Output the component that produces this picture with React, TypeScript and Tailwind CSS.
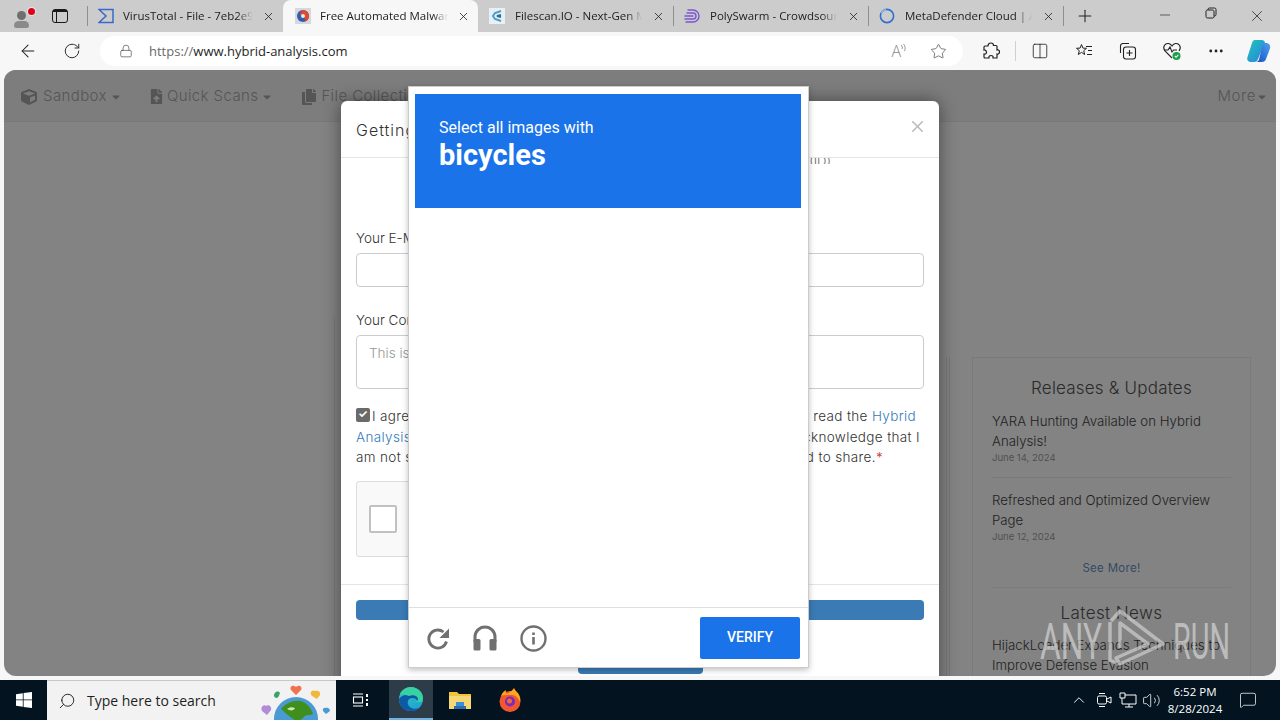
import { ArrowLeft, ChevronUp, Columns2, Lock, MessageSquare, Minus, MoreHorizontal, Plus, RotateCw, Search, Star, Volume2, X } from 'lucide-react'
import { FaCube, FaCopy, FaFileUpload, FaCaretDown } from 'react-icons/fa'
import type { ReactNode } from 'react'

const pageFont = { fontFamily: 'Inter, sans-serif' }

function VirusTotalIcon() {
  return (
    <svg width="16" height="16" viewBox="0 0 16 16" fill="none" stroke="#3b67c9" strokeWidth="1.5">
      <path d="M1 1.500h14v13H1L8 8z" />
    </svg>
  )
}

function HybridIcon() {
  return (
    <svg width="16" height="16" viewBox="0 0 16 16">
      <rect width="16" height="16" fill="#d8d8dc" />
      <circle cx="8" cy="8" r="6" fill="#2f5fb0" />
      <path d="M8 2a6 6 0 0 1 6 6 6 6 0 0 1-4 5.600C11 11 9 8 5 7c0-2 1-4 3-5z" fill="#e2492c" />
      <circle cx="8" cy="8" r="2" fill="#e8e8f0" />
    </svg>
  )
}

function FilescanIcon() {
  return (
    <svg width="16" height="16" viewBox="0 0 16 16" fill="none">
      <rect width="16" height="16" fill="#e8f0f5" />
      <path d="M12 3 6 5 4 8l2 3 6 2" stroke="#4b9fc9" strokeWidth="2" />
      <path d="M12 7 8 8l4 1" stroke="#2b6f9a" strokeWidth="2" />
    </svg>
  )
}

function PolySwarmIcon() {
  return (
    <svg width="16" height="16" viewBox="0 0 16 16" fill="none" stroke="#7a55d0" strokeWidth="1.400" strokeLinecap="round">
      <path d="M4 2h5a6 6 0 0 1 0 12H2" />
      <path d="M3 5h6a3 3 0 0 1 0 6H1" />
      <path d="M1 8h8" />
    </svg>
  )
}

function MetaDefenderIcon() {
  return (
    <svg width="16" height="16" viewBox="0 0 16 16" fill="none">
      <circle cx="8" cy="8" r="6.600" stroke="#2f6fd0" strokeWidth="1.600" />
      <path d="M2 5a7 7 0 0 1 5-3.400" stroke="#8fb6e8" strokeWidth="1.600" />
    </svg>
  )
}

function Tab({ icon, title, className }: { icon: ReactNode; title: string; className: string }) {
  return (
    <div className={`flex h-8 items-center pr-[8px] ${className}`}>
      <span className="w-4 shrink-0">{icon}</span>
      <span className="min-w-0 flex-1 overflow-hidden whitespace-nowrap text-[11.5px] [mask-image:linear-gradient(to_right,black_88%,transparent)]">
        {title}
      </span>
      <X className="h-[13px] w-[13px] shrink-0 text-[#222]" strokeWidth={1.5} />
    </div>
  )
}

function TabBar() {
  return (
    <div className="flex h-8 items-center bg-[#cccccc] text-[#222]">
      <div className="relative ml-[12px] h-6 w-6">
        <div className="absolute left-[5px] top-[7px] h-[9px] w-[9px] rounded-full bg-[#6f6f6f]" />
        <div className="absolute left-[2px] top-[17px] h-[7px] w-[15px] rounded-t-lg rounded-b-sm bg-[#8a8a8a]" />
        <div className="absolute left-[16px] top-[4px] h-[7px] w-[7px] rounded-full bg-[#e1001b] ring-1 ring-[#e6e6e6]" />
      </div>
      <div className="ml-[16px] flex h-[14px] w-[16px] flex-col rounded-[3px] border-[1.5px] border-[#1a1a1a]">
        <div className="h-[3px] bg-[#1a1a1a]" />
        <div className="h-full w-[4px] border-r border-[#1a1a1a]" />
      </div>
      <div className="ml-[19px] h-5 w-px bg-[#8f8f8f]" />
      <Tab className="w-[195px] gap-[9px] pl-[10px]" icon={<VirusTotalIcon />} title="VirusTotal - File - 7eb2e9f" />
      <Tab className="w-[195px] gap-[9px] rounded-t-lg bg-[#f7f7f7] pl-[12px]" icon={<HybridIcon />} title="Free Automated Malware Analysis" />
      <Tab className="w-[195px] gap-[10px] pl-[11px]" icon={<FilescanIcon />} title="Filescan.IO - Next-Gen Malware" />
      <div className="h-5 w-px bg-[#8f8f8f]" />
      <Tab className="w-[194px] gap-[10px] pl-[10px]" icon={<PolySwarmIcon />} title="PolySwarm - Crowdsourced" />
      <div className="h-5 w-px bg-[#8f8f8f]" />
      <Tab className="w-[194px] gap-[10px] pl-[10px]" icon={<MetaDefenderIcon />} title="MetaDefender Cloud | Advanced" />
      <div className="h-5 w-px bg-[#8f8f8f]" />
      <Plus className="ml-[11px] h-[20px] w-[20px]" strokeWidth={1.25} />
      <div className="ml-auto flex">
        <div className="flex w-[46px] justify-center"><Minus className="h-4 w-4" strokeWidth={1} /></div>
        <div className="flex w-[46px] justify-center">
          <svg width="12" height="12" viewBox="0 0 12 12" fill="none" stroke="#222" strokeWidth="1">
            <rect x="1" y="3" width="8" height="8" rx="1.500" />
            <path d="M3 3V2.500A1.500 1.500 0 0 1 4.500 1h5A1.500 1.500 0 0 1 11 2.500v5A1.500 1.500 0 0 1 9.500 9H9" />
          </svg>
        </div>
        <div className="flex w-[46px] justify-center"><X className="h-[18px] w-[18px]" strokeWidth={1} /></div>
      </div>
    </div>
  )
}

function ToolButton({ children }: { children: ReactNode }) {
  return <div className="flex h-[38px] w-11 shrink-0 items-center justify-center text-[#222]">{children}</div>
}

function Toolbar() {
  return (
    <div className="flex h-[38px] items-center bg-[#f7f7f7] pl-[6px]">
      <ToolButton><ArrowLeft className="h-5 w-5" strokeWidth={1.25} /></ToolButton>
      <ToolButton><RotateCw className="h-[18px] w-[18px]" strokeWidth={1.25} /></ToolButton>
      <div className="ml-[6px] flex h-[30px] w-[863px] items-center rounded-full bg-white pl-[19px]">
        <Lock className="h-[14px] w-[14px] text-[#555]" strokeWidth={1.25} />
        <span className="ml-[16px] mt-[1px] text-[13px] text-[#6a6a6a]">https://<span className="text-[#1f1f1f]">www.hybrid-analysis.com</span></span>
        <span className="ml-auto flex items-start text-[#8a8a8a]">
          <span className="text-[16px] font-light leading-none">A</span>
          <svg className="-ml-[1px]" width="7" height="10" viewBox="0 0 7 10" fill="none" stroke="#8a8a8a" strokeWidth="0.9">
            <path d="M1 2c1.500 1 1.500 3 1 4M3.500 1c2 2 2 5 1 7" />
          </svg>
        </span>
        <Star className="ml-[23px] mr-[16px] h-[17px] w-[17px] text-[#555]" strokeWidth={1.1} />
      </div>
      <div className="ml-[6px]" />
      <ToolButton>
        <svg width="18" height="18" viewBox="0 0 18 18" fill="none" stroke="#222" strokeWidth="1.200">
          <path d="M6 4c0-2 1.200-3 3-3s2.500 1 2.500 2.500H14a1 1 0 0 1 1 1V8c2-.5 2.500 1 2.500 2s-1 2.500-2.500 2V16H11c.5-2-1-2.500-2-2.500S6.500 14 7 16H3a1 1 0 0 1-1-1v-3c2 .5 2.500-1 2.500-2S3 7.500 2 8V5a1 1 0 0 1 1-1z" />
        </svg>
      </ToolButton>
      <div className="mx-[2px] h-5 w-px bg-[#d0d0d0]" />
      <ToolButton><Columns2 className="h-[18px] w-[18px]" strokeWidth={1.1} /></ToolButton>
      <ToolButton>
        <svg width="18" height="18" viewBox="0 0 18 18" fill="none" stroke="#222" strokeWidth="1">
          <path d="m6.500 2.500 1.400 3.600 3.600.2-2.800 2.400 1 3.800-3.200-2.100-3.200 2.100 1-3.800L1.500 6.300l3.600-.2z" strokeLinejoin="round" />
          <path d="M11 4.500h6M13 8.500h4M12 12.500h5" />
        </svg>
      </ToolButton>
      <ToolButton>
        <svg width="18" height="18" viewBox="0 0 18 18" fill="none" stroke="#222" strokeWidth="1.100">
          <rect x="4.500" y="5" width="12" height="12" rx="2.500" />
          <path d="M1.500 11V4a2.500 2.500 0 0 1 2.500-2.500h6M10.500 8v6M7.500 11h6" />
        </svg>
      </ToolButton>
      <ToolButton>
        <svg width="20" height="20" viewBox="0 0 20 20" fill="none" stroke="#222" strokeWidth="1.100">
          <path d="M10 17 3 10C0 6 3 2 6.500 2.500 8 2.700 9 3.500 10 5c1-1.500 2-2.300 3.500-2.500C17 2 20 6 17 10" />
          <path d="M2 9h4l2-3 2 5 1.500-2H15" />
          <circle cx="14.500" cy="15" r="4" fill="#1e9e4a" stroke="none" />
          <path d="m12.800 15 1.300 1.300 2.200-2.400" stroke="#fff" />
        </svg>
      </ToolButton>
      <ToolButton><MoreHorizontal className="h-[18px] w-[18px]" strokeWidth={1.75} /></ToolButton>
      <div className="flex w-[42px] justify-center">
        <svg width="26" height="26" viewBox="0 0 26 26">
          <defs>
            <linearGradient id="cpA" x1="0" y1="0" x2="1" y2="1"><stop offset="0" stopColor="#1fc7b8" /><stop offset="1" stopColor="#2a7fe0" /></linearGradient>
            <linearGradient id="cpB" x1="1" y1="0" x2="0" y2="1"><stop offset="0" stopColor="#4da3f0" /><stop offset="1" stopColor="#1b4fc4" /></linearGradient>
          </defs>
          <path d="M9 2h7c1.500 0 2.500 1 3 2.500L12 21c-.5 2-2 3-4 3H5c-3 0-4.500-2.500-3.500-5L6 5c.5-2 1.500-3 3-3z" fill="url(#cpA)" />
          <path d="M17 5h3c3 0 5 2.500 4 5.500L20 21c-.5 2-2 3-4 3h-6c1.500 0 2.500-1 3-2.500z" fill="url(#cpB)" />
        </svg>
      </div>
    </div>
  )
}

function NavItem({ icon, label }: { icon: ReactNode; label: string }) {
  return (
    <div className="flex items-center text-[15px] font-light tracking-[0.4px] text-[#555]">
      {icon}
      <span className="ml-1">{label}</span>
      <FaCaretDown className="ml-[3px] h-3 w-3" />
    </div>
  )
}

function SidebarItem({ title, date, last }: { title: string; date: string; last?: boolean }) {
  return (
    <div className={last ? '' : 'border-b border-[#7a7a7a] pb-[13px]'}>
      <p className="text-[13.25px] font-light leading-[20px] text-[#222]">{title}</p>
      <p className="mt-[1px] text-[9.500px] leading-[12px] text-[#505050]">{date}</p>
    </div>
  )
}

function Backdrop() {
  return (
    <div className="relative h-full overflow-hidden rounded-xl bg-[#838383]" style={pageFont}>
      <div className="flex h-[52px] items-center justify-between border-b border-[#787878] bg-[#7d7d7d] pl-[17px] pr-[8px]">
        <div className="mt-[2px] flex gap-[28px]">
          <NavItem icon={<FaCube className="mr-[2px] h-4 w-4" />} label="Sandbox" />
          <NavItem icon={<FaFileUpload className="h-[15px] w-[13px]" />} label="Quick Scans" />
          <NavItem icon={<FaCopy className="h-4 w-4" />} label="File Collections" />
        </div>
        <div className="mt-[2px] flex items-center text-[15px] font-light tracking-[0.55px] text-[#555]">
          More
          <FaCaretDown className="h-3 w-3" />
        </div>
      </div>
      <div className="flex pl-[330px]">
        <div className="mt-[195px] h-[500px] w-[612px] border-l border-[#787878]" />
        <div className="mt-[235px] h-[400px] w-[4px] border-x border-[#787878]" />
        <div className="ml-[22px] mt-[235px] h-[400px] w-[279px] border border-[#7a7a7a] px-[19px]">
          <h3 className="mt-[18px] text-center text-[17px] font-light tracking-[0.2px] text-[#2a2a2a]">Releases &amp; Updates</h3>
          <div className="mt-[9px] flex flex-col gap-[12px]">
            <SidebarItem title="YARA Hunting Available on Hybrid Analysis!" date="June 14, 2024" />
            <SidebarItem last title="Refreshed and Optimized Overview Page" date="June 12, 2024" />
          </div>
          <p className="mt-[17px] border-b border-[#7a7a7a] pb-[10px] text-center text-[11.5px] tracking-[0.3px] text-[#324a64]">See More!</p>
          <h3 className="mt-[13px] text-center text-[17px] font-light tracking-[0.4px] text-[#2a2a2a]">Latest News</h3>
          <p className="mt-[9px] text-[13.25px] font-light leading-[20px] text-[#222]">HijackLoader Expands Techniques to Improve Defense Evasion</p>
        </div>
      </div>
      <Modal />
    </div>
  )
}

function Field({ label, multiline, placeholder }: { label: string; multiline?: boolean; placeholder?: string }) {
  return (
    <div>
      <p className="text-[13.5px] font-light leading-[20px] text-[#333]">{label}</p>
      <div className={multiline ? 'mt-[5px] h-[54px] rounded border border-[#cccccc] px-3 py-[7px] text-[13.5px] font-light text-[#999]' : 'mt-[5px] h-[34px] rounded border border-[#cccccc]'}>
        {placeholder}
      </div>
    </div>
  )
}

function Modal() {
  return (
    <div className="absolute left-[337px] top-[31px] h-[600px] w-[598px] rounded-md bg-white shadow-[0_0_18px_rgba(0,0,0,0.45)]">
      <div className="flex h-[57px] items-center justify-between border-b border-[#e5e5e5] pl-[15px] pr-[12px]">
        <span className="mt-[1px] text-[16px] font-light tracking-[1px] text-[#333]">Getting Started</span>
        <X className="-mt-[6px] h-[19px] w-[19px] text-[#bbbbbb]" strokeWidth={2} />
      </div>
      <div className="px-[15px]">
        <p className="h-[6px] overflow-hidden pr-[93px] text-right text-[13px] font-light leading-[6px] text-[#666]">(ID)</p>
        <div className="mt-[64px]"><Field label="Your E-Mail" /></div>
        <div className="mt-[23px]"><Field label="Your Company" multiline placeholder="This is" /></div>
        <div className="mt-[17px] text-[13.5px] font-light leading-[20.500px] tracking-[0.35px] text-[#333]">
          <div className="flex justify-between">
            <span className="flex items-center">
              <span className="-mt-[3px] flex h-[14px] w-[14px] items-center justify-center rounded-[2px] bg-[#6a6a6a] text-[11px] font-bold leading-none text-white">✓</span>
              <span className="ml-[2px]">I agree</span>
            </span>
            <span className="pr-[8px]">e read the <span className="text-[#337ab7]">Hybrid</span></span>
          </div>
          <div className="flex justify-between">
            <span className="text-[#337ab7]">Analysis</span>
            <span className="pr-[4px]">cknowledge that I</span>
          </div>
          <div className="flex justify-between">
            <span>am not s</span>
            <span className="pr-[41px]">ed to share.<span className="text-[#c9302c]">*</span></span>
          </div>
        </div>
        <div className="mt-[13px] flex h-[76px] w-[300px] items-center rounded-[3px] border border-[#dddddd] bg-[#f9f9f9] pl-[12px]">
          <div className="h-[28px] w-[28px] rounded-[2px] border-2 border-[#c1c1c1] bg-white" />
        </div>
      </div>
      <div className="mt-[27px] border-t border-[#e5e5e5] px-[15px] pt-[15px]">
        <div className="h-[20px] rounded bg-[#3a7ab5]" />
        <div className="mx-auto mt-[20px] h-[34px] w-[125px] rounded bg-[#3a7ab5]" />
      </div>
    </div>
  )
}

function Captcha() {
  return (
    <div className="absolute left-[408px] top-[86px] z-10 flex h-[582px] w-[401px] flex-col border border-[#cccccc] bg-white shadow-[0_2px_6px_rgba(0,0,0,0.25)]" style={{ fontFamily: 'Roboto, sans-serif' }}>
      <div className="relative mx-[6px] mt-[7px] h-[114px] w-[386px] bg-[#1a73e8] pl-[24px] pt-[23px] text-white">
        <p className="text-[16px] leading-[22px]">Select all images with</p>
        <p className="text-[29px] font-bold leading-[32px]">bicycles</p>
      </div>
      <div className="flex-1" />
      <div className="flex h-[60px] items-center border-t border-[#dfdfdf] pl-[17px] pr-[8px]">
        <svg className="mt-[2px]" width="24" height="24" viewBox="0 0 24 24" fill="none" stroke="#707070" strokeWidth="2.800">
          <path d="M20.500 14.500A9 9 0 1 1 17.500 5" />
          <path d="M23 1.500V11h-9.500z" fill="#707070" stroke="none" />
        </svg>
        <svg className="ml-[22px] mt-[1px]" width="26" height="26" viewBox="0 0 26 26" fill="none">
          <path d="M3 17v-5a10 10 0 0 1 20 0v5" stroke="#707070" strokeWidth="3" />
          <rect x="1.500" y="14" width="7" height="11.500" rx="1.500" fill="#707070" />
          <rect x="17.500" y="14" width="7" height="11.500" rx="1.500" fill="#707070" />
        </svg>
        <svg className="ml-[22px] mt-[2px] h-[27px] w-[27px]" viewBox="0 0 27 27" fill="none" stroke="#707070" strokeWidth="2.400">
          <circle cx="13.500" cy="13.500" r="12" />
          <path d="M13.500 12v7.500M13.500 7.500v2.500" strokeWidth="2.600" />
        </svg>
        <div className="ml-auto flex h-[42px] w-[100px] items-center justify-center rounded-[2px] bg-[#1a73e8] text-[14px] font-medium text-white">VERIFY</div>
      </div>
    </div>
  )
}

function Watermark() {
  return (
    <svg className="absolute left-[1036px] top-[606px] z-10" width="200" height="60" viewBox="0 0 200 60" fill="none">
      <text x="4" y="53" fontFamily="Roboto, sans-serif" fontSize="50" fill="#cfcfcf" fillOpacity="0.75" textLength="62" lengthAdjust="spacingAndGlyphs">ANY</text>
      <path d="M74 16v38l6 3M75 15l9-10 43 33-43 20-4-6 32-14-28-21v25" stroke="#cfcfcf" strokeOpacity="0.7" strokeWidth="3.500" strokeLinejoin="round" />
      <text x="137" y="53" fontFamily="Roboto, sans-serif" fontSize="50" fill="#cfcfcf" fillOpacity="0.75" textLength="57" lengthAdjust="spacingAndGlyphs">RUN</text>
    </svg>
  )
}

function Doodle() {
  return (
    <svg className="absolute left-[212px] top-0" width="74" height="40" viewBox="0 0 74 40">
      <circle cx="37" cy="38" r="22" fill="#4a9ad4" />
      <path d="M22 28c5-6 12-9 20-8 6 2 10 7 12 13-4 2-7 0-9 3-3 3-5 4-8 4-4-3-9-6-15-12z" fill="#3f8f1f" />
      <path d="M28 28c3-2 5-2 8-1-1 3-5 3-8 1z" fill="#cfe4a8" />
      <path d="m37 14-5-5c-2-3 2-6 5-3 3-3 7 0 5 3z" fill="#ef7250" />
      <path d="M18 17c-3 0-4-3-2-5 1-2 4-2 5 0-1 2-1 4-3 5z" fill="#36a56c" />
      <path d="m58 18-5-3c-3-3 0-7 3-5 3-1 6 1 5 4z" fill="#f2b83a" />
      <path d="m8 34-5-4c-2-4 2-7 4-5 3-2 6 1 5 4z" fill="#b18ad8" />
      <path d="m67 33-3-3c-1-3 2-4 3-3 2-1 4 1 4 3z" fill="#4a9ad4" />
    </svg>
  )
}

function EdgeIcon() {
  return (
    <svg width="26" height="26" viewBox="0 0 26 26">
      <defs>
        <linearGradient id="edgeA" x1="0" y1="0" x2="1" y2="1"><stop offset="0" stopColor="#36c9a8" /><stop offset="1" stopColor="#1b9de2" /></linearGradient>
      </defs>
      <circle cx="13" cy="13" r="12" fill="url(#edgeA)" />
      <path d="M1 13c0 7 5 12 12 12 3 0 6-1 8-3-5 2-10 0-11-4-1-3 1-6 4-6s5 1 5 3h6c0-3-3-5-7-6-7-2-15 0-17 4z" fill="#0c59a8" />
      <path d="M11 10c4-2 9 0 9 3 0 2-2 3-5 3h9c1-1 1-3 1-4C25 6 19 1 13 1 8 1 4 4 2 8c2 0 6 1 9 2z" fill="#37d1a2" />
    </svg>
  )
}

function FolderIcon() {
  return (
    <svg width="22" height="20" viewBox="0 0 22 20">
      <path d="M0 2h8l2 2h12v15H0z" fill="#f0c33c" />
      <path d="M0 6h22v13H0z" fill="#f7d774" />
      <rect x="7" y="12" width="8" height="4" fill="#3b8fd6" />
      <rect x="5" y="16" width="12" height="3" fill="#2d6cb3" />
    </svg>
  )
}

function FirefoxIcon() {
  return (
    <svg width="24" height="24" viewBox="0 0 24 24">
      <circle cx="12" cy="13.500" r="10.500" fill="#f0572c" />
      <path d="M3 8c1-3 3-5 5-6-.5 2 0 3 1 4 3-2 6-4 7-6 1 2 2 3 3 4 3 3 4 7 3 10-2-5-6-8-11-7-4 0-7 0-8 1z" fill="#ffa51f" />
      <circle cx="12" cy="13.500" r="5" fill="#7a2bc2" />
      <circle cx="11.500" cy="13" r="2.500" fill="#f5682a" />
    </svg>
  )
}

function Taskbar() {
  return (
    <div className="flex h-10 items-center bg-[#03131f] text-white" style={{ fontFamily: 'Open Sans, sans-serif' }}>
      <div className="flex w-[47px] justify-center">
        <svg width="16" height="16" viewBox="0 0 16 16" fill="#fff">
          <path d="M0 2.200 6.800 1.200V7.500H0zM7.600 1.100 16 0v7.500H7.600zM0 8.300h6.800v6.500L0 13.800zM7.600 8.300H16V16l-8.400-1.100z" />
        </svg>
      </div>
      <div className="relative flex h-10 w-[289px] items-center border-t border-[#c8c8c8] bg-[#f2f2f2] pl-[11px] text-[#1f1f1f]">
        <Search className="h-[18px] w-[18px] -scale-x-100" strokeWidth={1.25} />
        <span className="ml-[11px] text-[14px]">Type here to search</span>
        <Doodle />
      </div>
      <div className="ml-[12px] flex w-[24px] justify-center">
        <svg width="17" height="16" viewBox="0 0 17 16" fill="none" stroke="#fff" strokeWidth="1.100">
          <path d="M1 2h10M1 14h10" />
          <rect x="1.500" y="5" width="9" height="6" />
          <path d="M15 2v3M15 7v2M15 11v3" strokeWidth="2" />
        </svg>
      </div>
      <div className="ml-[17px] flex h-10 w-[44px] items-center justify-center border-b-[2px] border-[#74b3e0] bg-[#2c3d49]"><EdgeIcon /></div>
      <div className="ml-[16px] flex w-[22px] justify-center"><FolderIcon /></div>
      <div className="ml-[27px] flex w-[24px] justify-center"><FirefoxIcon /></div>
      <div className="ml-auto flex items-center">
        <ChevronUp className="h-[18px] w-[18px]" strokeWidth={1.25} />
        <svg className="ml-[8px]" width="16" height="18" viewBox="0 0 16 18" fill="none" stroke="#fff" strokeWidth="1">
          <rect x="1.500" y="5" width="9" height="8" rx="1.500" />
          <path d="m11 8 4-2v6l-4-2M3 2.500h6M3 15.500h6" />
        </svg>
        <svg className="ml-[7px]" width="18" height="16" viewBox="0 0 18 16" fill="none" stroke="#fff" strokeWidth="1">
          <path d="M1 1h5v5H1zM6 3h11v9H3V6M10 12v3M6 15h8" />
        </svg>
        <Volume2 className="ml-[5px] h-[19px] w-[19px]" strokeWidth={1} />
        <div className="ml-[4px] w-[60px] text-center text-[11.5px] leading-[17px]">
          <p>6:52 PM</p>
          <p>8/28/2024</p>
        </div>
        <MessageSquare className="ml-[14px] mr-[23px] h-[18px] w-[18px]" strokeWidth={1} />
      </div>
    </div>
  )
}

export default function App() {
  return (
    <div className="relative flex h-[720px] w-[1280px] flex-col overflow-hidden bg-[#f7f7f7]" style={{ fontFamily: 'Open Sans, sans-serif' }}>
      <TabBar />
      <Toolbar />
      <div className="min-h-0 flex-1 px-1 pb-1">
        <Backdrop />
      </div>
      <Taskbar />
      <Captcha />
      <Watermark />
    </div>
  )
}
